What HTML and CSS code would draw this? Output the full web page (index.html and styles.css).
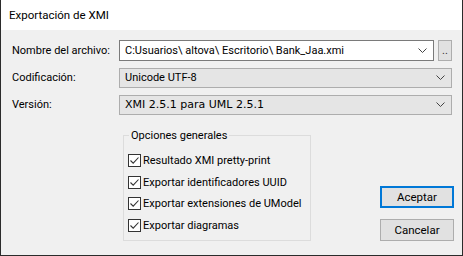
FILE: index.html
```html
<!DOCTYPE html>
<html lang="es">
<head>
    <meta charset="UTF-8" />
    <title>Exportación de XMI</title>
    <link rel="stylesheet" href="styles.css">
</head>
<body>
    <div class="window">
        <div class="titlebar">Exportación de XMI</div>
        <div class="content">
            <div class="form-row">
                <label class="label">Nombre del archivo:</label>
                <div class="field edit">
                    <span class="value">C:Usuarios\ altova\ Escritorio\ Bank_Jaa.xmi</span>
                    <svg class="chev" width="9" height="5" viewBox="0 0 9 5"><path d="M0.5 0.5 L4.5 4.5 L8.5 0.5" fill="none" stroke="#444" stroke-width="1"/></svg>
                </div>
                <button class="browse">..</button>
            </div>
            <div class="form-row">
                <label class="label">Codificación:</label>
                <div class="field combo">
                    <span class="value">Unicode UTF-8</span>
                    <svg class="chev" width="9" height="5" viewBox="0 0 9 5"><path d="M0.5 0.5 L4.5 4.5 L8.5 0.5" fill="none" stroke="#444" stroke-width="1"/></svg>
                </div>
            </div>
            <div class="form-row">
                <label class="label">Versión:</label>
                <div class="field combo">
                    <span class="value wide">XMI 2.5.1 para UML 2.5.1</span>
                    <svg class="chev" width="9" height="5" viewBox="0 0 9 5"><path d="M0.5 0.5 L4.5 4.5 L8.5 0.5" fill="none" stroke="#444" stroke-width="1"/></svg>
                </div>
            </div>

            <div class="lower">
                <fieldset class="group">
                    <legend>Opciones generales</legend>
                    <div class="check"><span class="box"><svg width="11" height="11" viewBox="0 0 11 11"><path d="M1.5 5.5 L4.2 8.2 L9.5 2.5" fill="none" stroke="#333" stroke-width="1.1"/></svg></span>Resultado XMI pretty-print</div>
                    <div class="check"><span class="box"><svg width="11" height="11" viewBox="0 0 11 11"><path d="M1.5 5.5 L4.2 8.2 L9.5 2.5" fill="none" stroke="#333" stroke-width="1.1"/></svg></span>Exportar identificadores UUID</div>
                    <div class="check"><span class="box"><svg width="11" height="11" viewBox="0 0 11 11"><path d="M1.5 5.5 L4.2 8.2 L9.5 2.5" fill="none" stroke="#333" stroke-width="1.1"/></svg></span>Exportar extensiones de UModel</div>
                    <div class="check"><span class="box"><svg width="11" height="11" viewBox="0 0 11 11"><path d="M1.5 5.5 L4.2 8.2 L9.5 2.5" fill="none" stroke="#333" stroke-width="1.1"/></svg></span>Exportar diagramas</div>
                </fieldset>
                <div class="buttons">
                    <button class="btn default">Aceptar</button>
                    <button class="btn">Cancelar</button>
                </div>
            </div>
        </div>
    </div>
</body>
</html>
```

FILE: styles.css
```css
body {
    margin: 0; padding: 0;
    font-family: Roboto, "Liberation Sans", sans-serif;
    font-size: 11px;
    color: #000;
    background: #fff;
}
.window {
    width: 463px; height: 256px;
    box-sizing: border-box;
    border: 1px solid #2b2b2b; border-top: none;
    background: #f0f0f0;
    white-space: nowrap;
}
.titlebar {
    height: 30px;
    background: #fff;
    padding-left: 8px;
    line-height: 30px;
    font-size: 11.5px;
}
.content {
    padding: 10px 10px 0 11px;
}
.form-row {
    display: flex; align-items: center;
    height: 21px;
    margin-bottom: 6px;
}
.label {
    width: 107px;
    flex: none;
}
.field {
    flex: 1;
    height: 100%;
    box-sizing: border-box;
    display: flex; align-items: center;
    padding: 0 6px 0 5px;
}
.field .value { flex: 1; }
.field .wide {
    font-family: "DejaVu Sans", Verdana, sans-serif;
    font-size: 11px;
}
.edit {
    background: #fff;
    border: 1px solid #7a7a7a;
}
.combo {
    background: #e5e5e5;
    border: 1px solid #adadad;
    height: 20px;
}
.chev { flex: none; }
.browse {
    width: 14px; height: 21px;
    margin-left: 4px;
    padding: 0;
    border: 1px solid #adadad;
    background: #e1e1e1;
    font-family: inherit; font-size: 11px;
    line-height: 15px;
    color: #333;
}

.lower {
    display: flex; align-items: flex-start;
}
.group {
    flex: none;
    margin: 8px 0 0 111px;
    width: 188px; min-width: 0; height: 112px;
    box-sizing: border-box;
    padding: 8px 4px 0 4px;
    border: 1px solid #dcdcdc;
}
.group legend {
    padding: 0 2px;
    margin-left: 1px;
}
.check {
    display: flex; align-items: center;
    height: 21.5px;
}
.box {
    flex: none;
    width: 13px; height: 13px;
    box-sizing: border-box;
    border: 1px solid #333;
    background: #fff;
    margin-right: 2px;
    display: flex; align-items: center; justify-content: center;
}
.buttons {
    margin: 65px 0 0 69px;
    display: flex; flex-direction: column; gap: 11px;
}
.btn {
    width: 74px; height: 22px;
    box-sizing: border-box;
    padding: 0;
    background: #e1e1e1;
    border: 1px solid #adadad;
    font-family: inherit; font-size: 11.5px;
    color: #000;
}
.btn.default {
    border: 2px solid #0078d7;
}
```
